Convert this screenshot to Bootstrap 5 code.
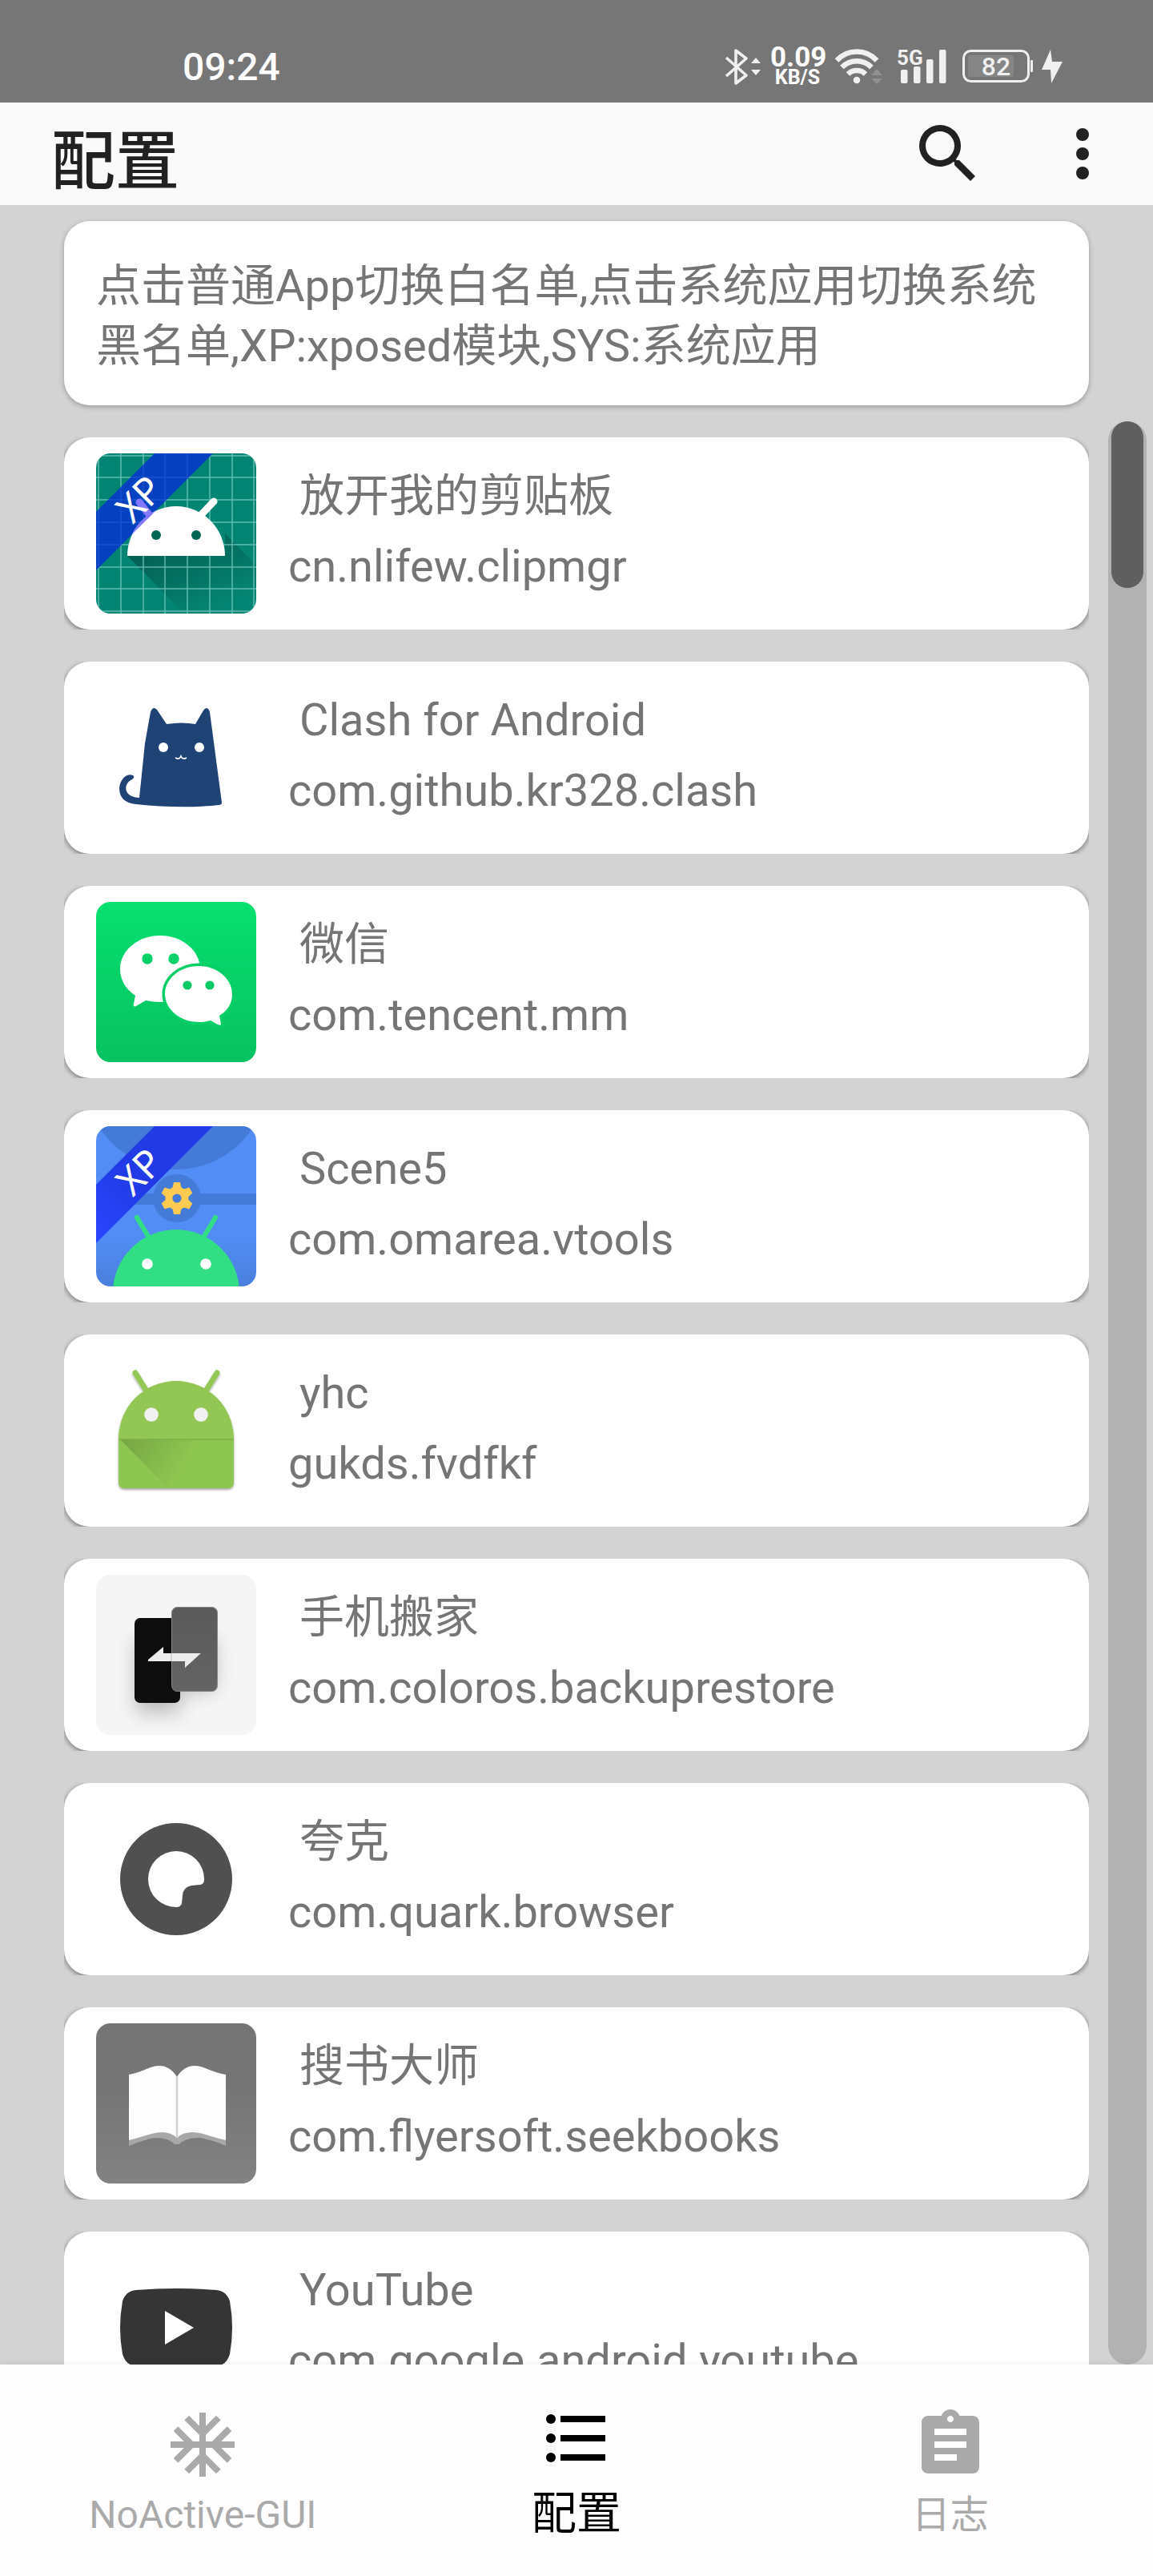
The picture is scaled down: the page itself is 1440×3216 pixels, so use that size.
<!DOCTYPE html>
<html lang="zh-CN">
<head>
<meta charset="utf-8">
<meta name="viewport" content="width=device-width, initial-scale=1">
<title>配置</title>
<link href="https://cdn.jsdelivr.net/npm/bootstrap@5.3.0/dist/css/bootstrap.min.css" rel="stylesheet">
<style>
body{font-family:Roboto,"Noto Sans CJK SC",sans-serif;background:#d3d3d3;color:#757575}
svg{display:block;flex:none}
.statusbar{height:128px;background:#767676;color:#fff;padding:36px 112px 0 228px}
.clock{font-size:48px;line-height:96px;height:92px;font-weight:500}
.indicators{height:92px;gap:10px;color:#f0f0f0}
.indicators svg{overflow:visible}
.netspeed{font-weight:700;width:68px;color:#fff}
.netspeed .rate{font-size:35px;line-height:24px}
.netspeed .unit{font-size:25px;line-height:26px}
.appbar{height:128px;background:#fafafa;color:#212121;padding:0 40px 0 64px}
.appbar h1{font-size:80px;line-height:96px;font-weight:500;padding-top:20px}
.appbar .tools{gap:72px}
.appbar .btn{color:#212121;width:96px;height:96px}
.applist{padding:20px 24px 0 80px}
.notice{border-radius:32px;padding:44px 40px 36px;font-size:56px;line-height:75px;box-shadow:0 2px 6px rgba(0,0,0,.28);margin-bottom:40px}
.slot{overflow:hidden;margin-bottom:40px}
.app{border-radius:32px;padding:20px 40px;color:#757575;font-size:56px;line-height:88px;box-shadow:0 2px 6px rgba(0,0,0,.45)}
.app .art{width:200px;height:200px;border-radius:18px}
.app .info{padding:0 0 6px 40px}
.app .title{padding-left:14px}
.rail{width:48px;margin:270px 8px 0 0;border-radius:24px;background:#b2b2b2;padding:0 4px}
.thumb{height:208px;border-radius:20px;background:#5f5f5f}
.tabs{height:264px;background:#fefefe;padding:0 20px;box-shadow:0 -2px 8px rgba(0,0,0,.05);z-index:1}
.tabs a{color:#aaa;font-size:48px;line-height:64px;padding-top:52px}
.tabs a.active{color:#000;font-size:56px;padding-top:44px}
.tabs a span{padding-top:8px}
.tabs a.active span{padding-top:14px}
</style>
</head>
<body class="vh-100 d-flex flex-column overflow-hidden">

<header class="flex-shrink-0">
  <div class="statusbar d-flex justify-content-between">
    <div class="clock">09:24</div>
    <div class="indicators d-flex align-items-start pt-4">
      <svg width="46" height="46" viewBox="0 0 46 46" fill="none" stroke="currentColor" stroke-width="3.6" stroke-linejoin="round" aria-label="蓝牙"><path d="M1 12 26 34 13 44V3L26 13 1 35"/><path d="M32 19l6-7 6 7zM32 27h12l-6 7z" fill="currentColor" stroke="none"/></svg>
      <div class="netspeed text-center"><div class="rate">0.09</div><div class="unit">KB/S</div></div>
      <svg width="70" height="46" viewBox="0 0 70 46" fill="none" stroke="currentColor" stroke-width="6.5" aria-label="Wi-Fi"><path d="M5 15.500A34 34 0 0 1 55 15.500M11.500 24A26 26 0 0 1 48.500 24M19 32.500A16 16 0 0 1 41 32.500"/><circle cx="30" cy="40" r="4.300" fill="currentColor" stroke="none"/><path d="M48 34l7-8 7 8zM48 38h14l-7 7z" fill="#909090" stroke="none"/></svg>
      <svg width="66" height="46" viewBox="0 0 66 46" fill="currentColor" aria-label="5G"><text x="0" y="21" font-size="26" font-weight="700">5G</text><rect x="5" y="27" width="8.500" height="17" rx="2"/><rect x="21" y="23" width="8.500" height="21" rx="2"/><rect x="37" y="14" width="8.500" height="30" rx="2"/><rect x="53" y="2" width="8.500" height="42" rx="2"/></svg>
      <svg class="ms-1" width="128" height="46" viewBox="0 0 128 46" fill="currentColor" aria-label="电量"><rect x="3.500" y="3.500" width="81" height="38" rx="9" fill="none" stroke="currentColor" stroke-width="3"/><rect x="9" y="9" width="57" height="27" rx="3" fill="#858585"/><rect x="87" y="15" width="3" height="15" rx="1"/><text x="44" y="34" font-size="32" font-weight="500" text-anchor="middle">82</text><path d="M112 2 101 27h11l1 17 14-27h-13z"/></svg>
    </div>
  </div>
  <div class="appbar d-flex align-items-center justify-content-between">
    <h1 class="m-0">配置</h1>
    <div class="tools d-flex">
      <button class="btn p-0 border-0" type="button" aria-label="搜索"><svg width="96" height="96" viewBox="0 0 24 24" fill="currentColor"><path d="M15.500 14h-.79l-.28-.27A6.471 6.471 0 0 0 16 9.500 6.500 6.500 0 1 0 9.500 16c1.610 0 3.090-.59 4.230-1.570l.27.28v.79l5 4.990L20.490 19l-4.990-5zm-6 0C7.010 14 5 11.990 5 9.500S7.010 5 9.500 5 14 7.010 14 9.500 11.990 14 9.500 14z"/></svg></button>
      <button class="btn p-0 border-0" type="button" aria-label="更多"><svg width="96" height="96" viewBox="0 0 24 24" fill="currentColor"><circle cx="12" cy="6" r="2"/><circle cx="12" cy="12" r="2"/><circle cx="12" cy="18" r="2"/></svg></button>
    </div>
  </div>
</header>

<main class="d-flex flex-grow-1 overflow-hidden">
  <div class="applist flex-grow-1">
    <p class="notice bg-white">点击普通App切换白名单,点击系统应用切换系统黑名单,XP:xposed模块,SYS:系统应用</p>

    <ul class="list-unstyled m-0">
      <li class="slot"><button type="button" class="app btn bg-white border-0 w-100 d-flex align-items-center text-start">
        <svg class="art" viewBox="0 0 200 200">
          <defs>
            <clipPath id="band"><path d="M73 0H146L0 146V73z"/></clipPath>
            <linearGradient id="cast" x1=".1" y1="0" x2=".75" y2=".9"><stop offset="0" stop-opacity=".34"/><stop offset="1" stop-opacity="0"/></linearGradient>
          </defs>
          <rect width="200" height="200" fill="#048573"/>
          <path d="M39 128H161V100L200 140V200H110z" fill="url(#cast)"/>
          <path d="M3 0V200M31 0V200M59 0V200M86 0V200M114 0V200M142 0V200M170 0V200M197 0V200M0 3H200M0 30H200M0 58H200M0 86H200M0 114H200M0 142H200M0 169H200M0 197H200" stroke="#7fd0c4" stroke-opacity=".75" stroke-width="1.500"/>
          <path d="M73 0H146L0 146V73z" fill="#0440c0"/>
          <path d="M86 0V60M114 0V32M59 14V86M31 42V114M3 70V140M43 30H116M15 58H88M0 86H60M0 114H32" stroke="#4068e0" stroke-opacity=".4" stroke-width="1.500"/>
          <path d="M132 76l15-16" stroke="#fff" stroke-width="9" stroke-linecap="round"/>
          <path d="M39 128A61 62 0 0 1 161 128z" fill="#fff"/>
          <g clip-path="url(#band)"><path d="M39 128A61 62 0 0 1 161 128z" fill="#8478fa"/><path d="M54 61l15 19" stroke="#8478fa" stroke-width="9" stroke-linecap="round"/></g>
          <circle cx="75" cy="102" r="6" fill="#046655"/><circle cx="125" cy="102" r="6" fill="#046655"/>
          <text transform="translate(54 57) rotate(-45)" y="17" font-size="48" text-anchor="middle" fill="#fff" font-family="Noto Sans">XP</text>
        </svg>
        <span class="info"><span class="title d-block">放开我的剪贴板</span><span class="d-block">cn.nlifew.clipmgr</span></span>
      </button></li>

      <li class="slot"><button type="button" class="app btn bg-white border-0 w-100 d-flex align-items-center text-start">
        <svg class="art" viewBox="0 0 200 200">
          <path d="M68 43Q71 35 76 40L88 58Q107 55 124 58L134 41Q139 34 142 43L157 156Q157 159 153 159Q106 164 50 158Q29 156 29 138C30 127 38 119 46 122Q49 124 45 127C34 132 33 149 54 150L61 82Z" fill="#1f4374"/>
          <circle cx="84" cy="87" r="6" fill="#fff"/><circle cx="129" cy="87" r="6" fill="#fff"/>
          <path d="M99 100Q104 103 106 98Q108 103 113 100" fill="none" stroke="#fff" stroke-width="1.600"/>
        </svg>
        <span class="info"><span class="title d-block">Clash for Android</span><span class="d-block">com.github.kr328.clash</span></span>
      </button></li>

      <li class="slot"><button type="button" class="app btn bg-white border-0 w-100 d-flex align-items-center text-start">
        <svg class="art" viewBox="0 0 200 200">
          <defs><linearGradient id="wx" x2="0" y2="1"><stop stop-color="#07e06f"/><stop offset="1" stop-color="#07c160"/></linearGradient></defs>
          <rect width="200" height="200" fill="url(#wx)"/>
          <path d="M80 42C108 42 130 61 130 84S108 126 80 125Q70 125 62 123L50 130Q46 132 47 127L49 117C37 109 30 97 30 84 30 61 52 42 80 42z" fill="#fff"/>
          <circle cx="64" cy="71" r="6.700" fill="#07d167"/><circle cx="97" cy="71" r="6.700" fill="#07d167"/>
          <path d="M128 80C151 80 170 96 170 115 170 127 164 136 154 142L156 152Q156 155 152 153L143 148Q136 150 128 150C105 150 86 134 86 115S105 80 128 80z" fill="#fff" stroke="#07cf66" stroke-width="7" paint-order="stroke"/>
          <circle cx="114" cy="104" r="5.600" fill="#07cb64"/><circle cx="142" cy="104" r="5.600" fill="#07cb64"/>
        </svg>
        <span class="info"><span class="title d-block">微信</span><span class="d-block">com.tencent.mm</span></span>
      </button></li>

      <li class="slot"><button type="button" class="app btn bg-white border-0 w-100 d-flex align-items-center text-start">
        <svg class="art" viewBox="0 0 200 200">
          <defs><linearGradient id="sc" x2="0" y2="1"><stop offset=".7" stop-color="#518df5"/><stop offset="1" stop-color="#4a7fdc"/></linearGradient><linearGradient id="rb" x1="1" y1="0" x2="0" y2="1"><stop stop-color="#213ae6"/><stop offset=".55" stop-color="#213ae6"/><stop offset="1" stop-color="#2a46ff"/></linearGradient></defs>
          <rect width="200" height="200" fill="url(#sc)"/>
          <circle cx="100" cy="-60" r="114" fill="#447bd8"/><rect y="84" width="200" height="14" fill="#447bd8"/><circle cx="101" cy="90" r="30" fill="#447bd8"/>
          <path d="M73 0H146L0 146V73z" fill="url(#rb)"/>
          <g fill="#ffca52"><circle cx="101" cy="90" r="14.500"/><path d="M95 79l2-9h8l2 9v22l-2 9h-8l-2-9z"/><path d="M95 79l2-9h8l2 9v22l-2 9h-8l-2-9z" transform="rotate(60 101 90)"/><path d="M95 79l2-9h8l2 9v22l-2 9h-8l-2-9z" transform="rotate(120 101 90)"/></g>
          <circle cx="101" cy="90" r="5.600" fill="#447bd8"/>
          <circle cx="100" cy="208" r="79" fill="#32de84"/>
          <path d="M51 114l15 25M149 114l-15 25" stroke="#32de84" stroke-width="6" stroke-linecap="round"/>
          <circle cx="64" cy="172" r="6.800" fill="#fff"/><circle cx="137" cy="172" r="6.800" fill="#fff"/>
          <text transform="translate(54 57) rotate(-45)" y="17" font-size="48" text-anchor="middle" fill="#fff" font-family="Noto Sans">XP</text>
        </svg>
        <span class="info"><span class="title d-block">Scene5</span><span class="d-block">com.omarea.vtools</span></span>
      </button></li>

      <li class="slot"><button type="button" class="app btn bg-white border-0 w-100 d-flex align-items-center text-start">
        <svg class="art" viewBox="0 0 200 200">
          <defs><linearGradient id="yh" gradientUnits="userSpaceOnUse" x1="35" y1="105" x2="105" y2="150"><stop stop-color="#000" stop-opacity=".17"/><stop offset="1" stop-color="#000" stop-opacity="0"/></linearGradient>
          <filter id="soft" x="-10%" y="-10%" width="120%" height="120%"><feDropShadow dx="0" dy="2" stdDeviation="1.500" flood-opacity=".35"/></filter></defs>
          <g filter="url(#soft)"><path d="M49 28l15 24M151 28l-15 24" stroke="#92c754" stroke-width="7" stroke-linecap="round"/>
          <path d="M28 110A72 72 0 0 1 172 110V164Q172 172 164 172H36Q28 172 28 164z" fill="#92c754"/></g>
          <path d="M28 111H172V164Q172 172 164 172H36Q28 172 28 164z" fill="#8dc650"/>
          <path d="M30 111H170V172H90z" fill="url(#yh)"/><path d="M28 111H172" stroke="#7cb046" stroke-width="1.500"/>
          <circle cx="69" cy="80" r="8.800" fill="#f1f1f1"/><circle cx="131" cy="80" r="8.800" fill="#f1f1f1"/>
        </svg>
        <span class="info"><span class="title d-block">yhc</span><span class="d-block">gukds.fvdfkf</span></span>
      </button></li>

      <li class="slot"><button type="button" class="app btn bg-white border-0 w-100 d-flex align-items-center text-start">
        <svg class="art" viewBox="0 0 200 200">
          <defs><filter id="haze" x="-50%" y="-50%" width="200%" height="200%"><feGaussianBlur stdDeviation="12"/></filter><linearGradient id="gp" x2="0" y2="1"><stop stop-color="#5a5a5a"/><stop offset="1" stop-color="#646464"/></linearGradient></defs>
          <rect width="200" height="200" fill="#f5f5f5"/>
          <path d="M50 80H148V145H105V172H50z" opacity=".24" filter="url(#haze)"/>
          <rect x="48" y="54" width="57" height="106" rx="7" fill="#0d0d0d"/>
          <rect x="94.500" y="40.500" width="57" height="105" rx="7" fill="url(#gp)" stroke="#858585"/>
          <path d="M65 106 84 90V98H131L111 116V108H65z" fill="#ededed"/><path d="M94 98V108" stroke="#bbb"/>
        </svg>
        <span class="info"><span class="title d-block">手机搬家</span><span class="d-block">com.coloros.backuprestore</span></span>
      </button></li>

      <li class="slot"><button type="button" class="app btn bg-white border-0 w-100 d-flex align-items-center text-start">
        <svg class="art" viewBox="0 0 200 200">
          <circle cx="100" cy="100" r="70" fill="#505050"/>
          <path d="M100 65A35 35 0 0 1 135 101Q135 106 130 107L119 108Q109 110 108 120L107 130Q106 135 100 135A35 35 0 0 1 100 65z" fill="#fff"/>
        </svg>
        <span class="info"><span class="title d-block">夸克</span><span class="d-block">com.quark.browser</span></span>
      </button></li>

      <li class="slot"><button type="button" class="app btn bg-white border-0 w-100 d-flex align-items-center text-start">
        <svg class="art" viewBox="0 0 200 200">
          <defs><linearGradient id="bk" x2="0" y2="1"><stop offset=".4" stop-color="#757575"/><stop offset="1" stop-color="#828282"/></linearGradient></defs>
          <rect width="200" height="200" fill="url(#bk)"/>
          <path d="M41 72V153Q58 146 72 143 90 142 98 151H104Q112 142 130 143 146 146 162 153V72z" fill="#a8a8a8"/>
          <path d="M41 64Q52 62 68 55 89 48 101 67 113 48 134 55 150 62 162 64V146Q146 142 134 138 112 132 101 143 90 132 69 138 56 142 41 146z" fill="#fdfdfd"/>
          <path d="M101 67V143" stroke="#d0d0d0" stroke-width="2.500"/>
        </svg>
        <span class="info"><span class="title d-block">搜书大师</span><span class="d-block">com.flyersoft.seekbooks</span></span>
      </button></li>

      <li class="slot"><button type="button" class="app btn bg-white border-0 w-100 d-flex align-items-center text-start">
        <svg class="art" viewBox="0 0 200 200">
          <path d="M50 53Q100 49 150 53 163 54 167 67 173 100 167 133 163 147 150 148 100 152 50 148 37 147 33 133 27 100 33 67 37 54 50 53z" fill="#353535"/>
          <path d="M86 79 122 100 86 121z" fill="#fff"/>
        </svg>
        <span class="info"><span class="title d-block">YouTube</span><span class="d-block">com.google.android.youtube</span></span>
      </button></li>
    </ul>
  </div>
  <div class="rail flex-shrink-0"><div class="thumb"></div></div>
</main>

<nav class="tabs d-flex flex-shrink-0 position-relative">
  <a href="#" class="w-100 d-flex flex-column align-items-center text-decoration-none"><svg width="96" height="96" viewBox="0 0 24 24" fill="currentColor"><path d="M22 11h-4.170l3.240-3.240-1.410-1.420L15 11h-2V9l4.660-4.660-1.420-1.410L13 6.170V2h-2v4.170L7.760 2.930 6.340 4.340 11 9v2H9L4.340 6.340 2.930 7.760 6.170 11H2v2h4.170l-3.240 3.240 1.410 1.420L9 13h2v2l-4.660 4.660 1.420 1.410L11 17.830V22h2v-4.170l3.240 3.240 1.420-1.410L13 15v-2h2l4.660 4.660 1.410-1.420L17.830 13H22z"/></svg><span>NoActive-GUI</span></a>
  <a href="#" class="active w-100 d-flex flex-column align-items-center text-decoration-none" aria-current="page"><svg width="96" height="96" viewBox="0 0 24 24" fill="currentColor"><circle cx="4" cy="6" r="1.500"/><circle cx="4" cy="12" r="1.500"/><circle cx="4" cy="18" r="1.500"/><path d="M7 5h14v2H7zM7 11h14v2H7zM7 17h14v2H7z"/></svg><span>配置</span></a>
  <a href="#" class="w-100 d-flex flex-column align-items-center text-decoration-none"><svg width="96" height="96" viewBox="0 0 24 24" fill="currentColor"><path d="M19 3h-4.180C14.400 1.840 13.300 1 12 1c-1.300 0-2.400.84-2.820 2H5c-1.100 0-2 .9-2 2v14c0 1.100.9 2 2 2h14c1.100 0 2-.9 2-2V5c0-1.100-.9-2-2-2zm-7 0c.55 0 1 .45 1 1s-.45 1-1 1-1-.45-1-1 .45-1 1-1zm2 14H7v-2h7v2zm3-4H7v-2h10v2zm0-4H7V7h10v2z"/></svg><span>日志</span></a>
</nav>

<script src="https://cdn.jsdelivr.net/npm/bootstrap@5.3.0/dist/js/bootstrap.bundle.min.js"></script>
</body>
</html>
